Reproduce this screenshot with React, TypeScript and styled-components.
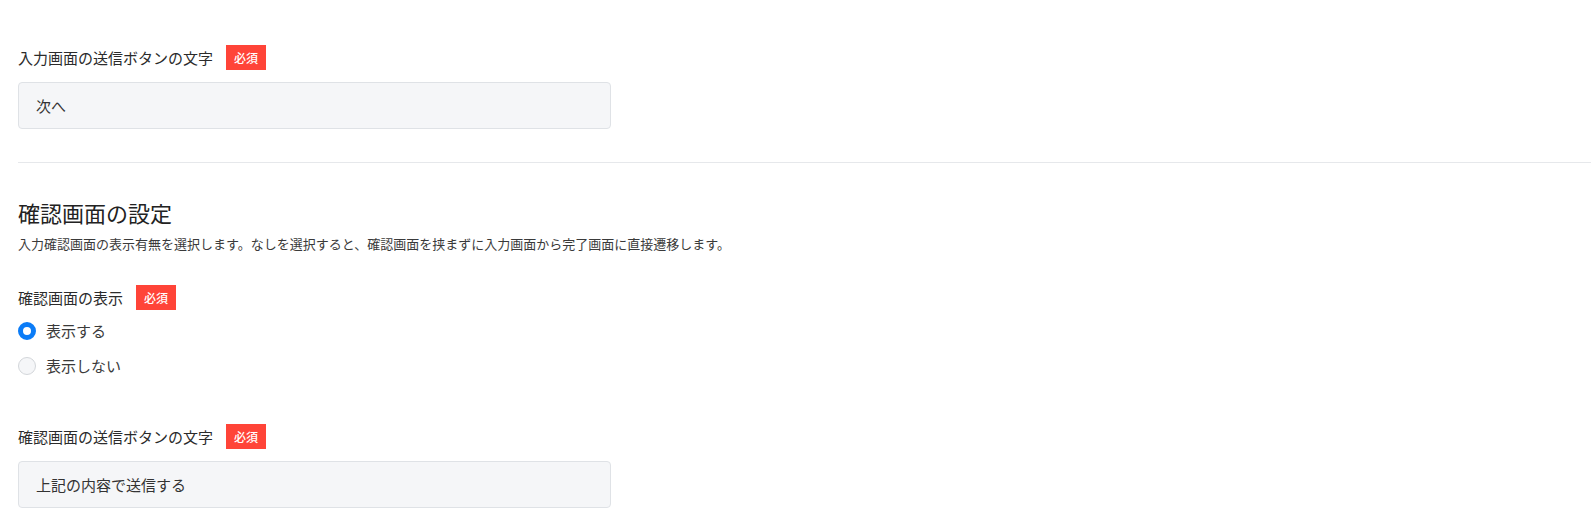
import styled, { createGlobalStyle } from 'styled-components';

const GlobalStyle = createGlobalStyle`
    body {
        margin: 0;
        background: #ffffff;
        font-family: "Noto Sans CJK JP", "Noto Sans", sans-serif;
        color: #2b2b2b;
    }
`;

const Page = styled.div`
    padding: 45px 0 0 18px;
`;

const Field = styled.div<{ mt?: number }>`
    margin-top: ${props => props.mt ?? 0}px;
`;

const LabelRow = styled.div`
    display: flex;
    align-items: center;
    height: 25px;
`;

const Label = styled.span`
    font-size: 15px;
    line-height: 25px;
    color: #2b2b2b;
`;

const Badge = styled.span`
    display: inline-flex;
    align-items: center;
    justify-content: center;
    margin-left: 13px;
    width: 40px;
    height: 25px;
    background: #ff4438;
    color: #ffffff;
    font-size: 12px;
    font-weight: 500;
`;

const TextInput = styled.div`
    box-sizing: border-box;
    margin-top: 12px;
    width: 593px;
    height: 47px;
    padding: 0 17px;
    display: flex;
    align-items: center;
    background: #f5f6f8;
    border: 1px solid #dfe2e6;
    border-radius: 4px;
    font-size: 15px;
    color: #333333;
`;

const Divider = styled.hr`
    margin: 33px 0 0;
    border: none;
    border-top: 1px solid #e6e8eb;
`;

const Heading = styled.h2`
    margin: 33px 0 0;
    font-size: 22px;
    font-weight: 400;
    line-height: 33px;
    color: #222222;
`;

const Description = styled.p`
    margin: 5px 0 0;
    font-size: 13px;
    line-height: 20px;
    color: #3a3a3a;
`;

const RadioList = styled.div`
    display: flex;
    flex-direction: column;
    gap: 10px;
    margin-top: 8px;
`;

const RadioRow = styled.label`
    display: flex;
    align-items: center;
    height: 25px;
    font-size: 15px;
    color: #3a3a3a;
`;

const RadioDot = styled.span<{ checked?: boolean }>`
    box-sizing: border-box;
    width: 18px;
    height: 18px;
    border-radius: 50%;
    margin-right: 10px;
    background: ${props => props.checked ? '#ffffff' : '#f5f6f8'};
    border: ${props => props.checked ? '5px solid #0b7cf7' : '1px solid #d3d6da'};
`;

const App = () => {
    return (
        <Page>
            <GlobalStyle />
            <Field>
                <LabelRow>
                    <Label>入力画面の送信ボタンの文字</Label>
                    <Badge>必須</Badge>
                </LabelRow>
                <TextInput>次へ</TextInput>
            </Field>
            <Divider />
            <Heading>確認画面の設定</Heading>
            <Description>
                入力確認画面の表示有無を選択します。なしを選択すると、確認画面を挟まずに入力画面から完了画面に直接遷移します。
            </Description>
            <Field mt={31}>
                <LabelRow>
                    <Label>確認画面の表示</Label>
                    <Badge>必須</Badge>
                </LabelRow>
                <RadioList>
                    <RadioRow>
                        <RadioDot checked />
                        表示する
                    </RadioRow>
                    <RadioRow>
                        <RadioDot />
                        表示しない
                    </RadioRow>
                </RadioList>
            </Field>
            <Field mt={46}>
                <LabelRow>
                    <Label>確認画面の送信ボタンの文字</Label>
                    <Badge>必須</Badge>
                </LabelRow>
                <TextInput>上記の内容で送信する</TextInput>
            </Field>
        </Page>
    );
};

export default App;
